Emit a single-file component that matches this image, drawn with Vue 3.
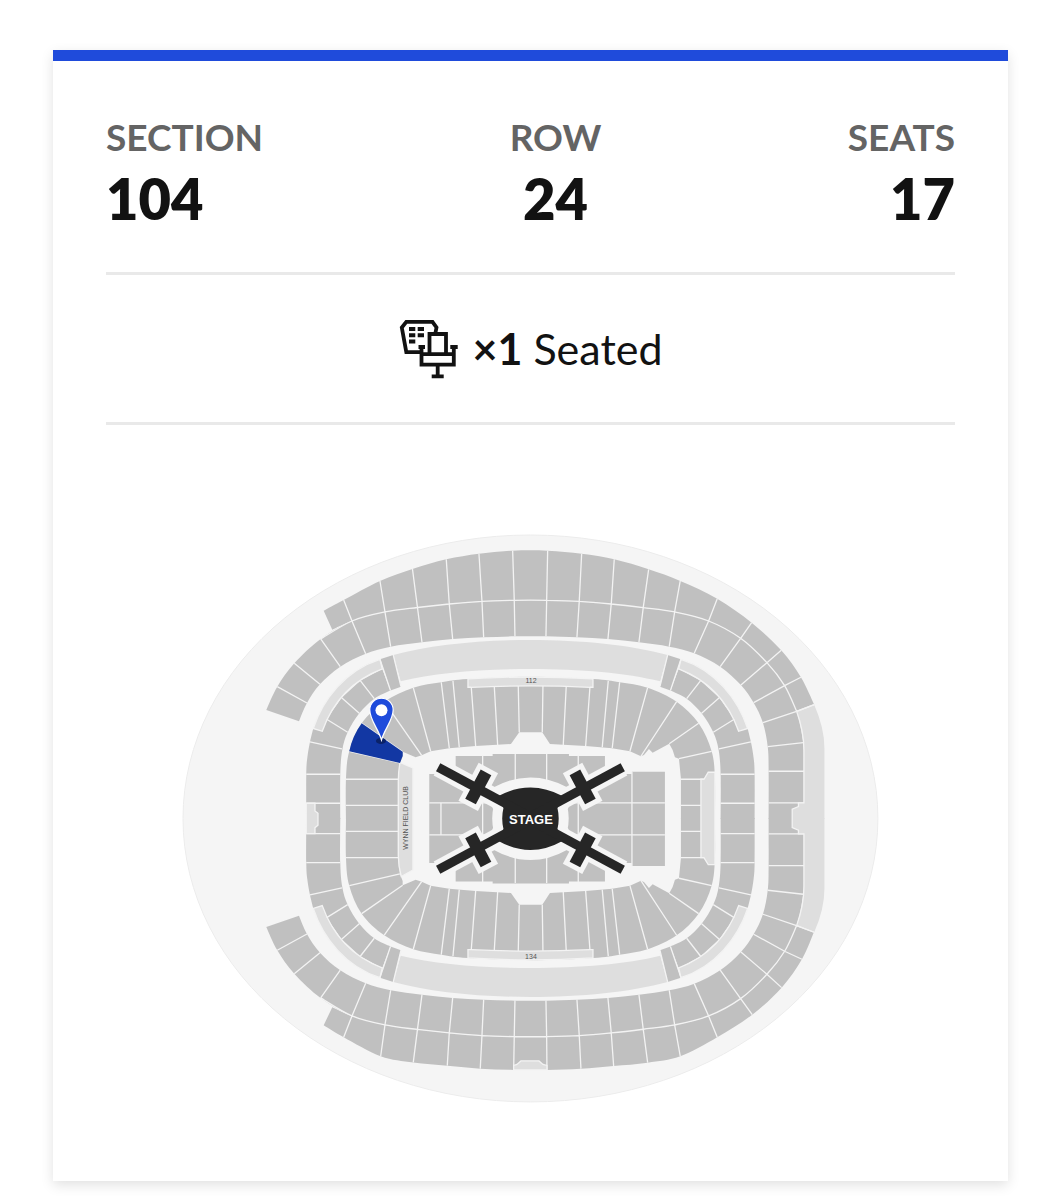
<script setup>
const details = [
    { label: 'SECTION', value: '104' },
    { label: 'ROW', value: '24' },
    { label: 'SEATS', value: '17' },
];

// The venue is symmetric, so most tiers are drawn once and flipped
const halves = ['', 'matrix(1 0 0 -1 0 1637)'];
const quarters = [...halves, 'matrix(-1 0 0 1 1061 0)', 'matrix(-1 0 0 -1 1061 1637)'];

// Smooth curve through a list of points
const segments = (pts) => {
    let d = '';
    for (let i = 0; i < pts.length - 1; i++) {
        const p0 = pts[i - 1] || pts[i];
        const p1 = pts[i];
        const p2 = pts[i + 1];
        const p3 = pts[i + 2] || p2;
        d += ` C ${p1[0] + (p2[0] - p0[0]) / 6} ${p1[1] + (p2[1] - p0[1]) / 6}`;
        d += ` ${p2[0] - (p3[0] - p1[0]) / 6} ${p2[1] - (p3[1] - p1[1]) / 6} ${p2[0]} ${p2[1]}`;
    }
    return d;
};

const curve = (pts) => `M ${pts[0].join(' ')}${segments(pts)}`;

const ribbon = (a, b) => {
    const back = [...b].reverse();
    return `${curve(a)} L ${back[0].join(' ')}${segments(back)} Z`;
};

const lines = (list) => list.map(([a, b]) => `M ${a.join(' ')} L ${b.join(' ')}`).join(' ');

const flip = (pts) => pts.map(([x, y]) => [x, 1637 - y]);

// Upper tier
const tierInner = [
    [299, 721.3], [307, 703], [320, 684.3], [340.3, 666.7], [365.7, 653.7], [390.7, 646.7],
    [422, 642.3], [452.7, 639], [483.7, 637.3], [515, 636.3], [546, 636.3], [577, 637.3],
    [608, 639], [639, 642.3], [669.3, 646.7], [694.3, 653.3], [720.3, 666.7], [741, 685],
    [753.7, 702.7], [763, 722.7], [767.8, 746.7], [768.7, 771.3], [768.7, 819],
];
const tierMiddle = [
    [266.3, 710], [277.3, 686.7], [294.3, 663.3], [320.7, 639], [352, 621], [385, 612],
    [417.5, 607.5], [449.3, 604], [482, 601.3], [514.3, 600.3], [546.7, 600.3], [579.3, 601.3],
    [611.3, 604], [643.3, 607.7], [674.7, 612], [708.7, 621], [740.7, 638.3], [767, 662.7],
    [784.7, 685.7], [796.7, 711.3], [803.3, 742.7], [804, 771.3], [804, 819],
];
const topOuter = [
    [343.7, 600], [380, 581], [412.5, 569], [446.3, 559.3], [479, 553.7], [512.7, 550.7],
    [547.7, 550.7], [581.7, 553.7], [614.3, 559.3], [648.7, 569.3], [680.3, 581], [717.3, 598.7],
    [751.7, 622.7], [781.3, 650.3], [801, 677.3], [814.3, 704.7],
];
const bottomOuter = [
    [343.7, 1037.3], [380.7, 1056.3], [413.3, 1062.5], [447.3, 1065.7], [480.3, 1068.7], [513.7, 1070],
    [547, 1070], [581, 1068.7], [613.7, 1066], [647.7, 1062.7], [680.3, 1056.3], [717.3, 1037.3],
    [752.3, 1014.7], [781.7, 987.7], [802, 959.3], [814, 932.3],
];

const innerRing = ribbon(tierInner, tierMiddle);
const innerRingLines = lines(tierInner.slice(1, 22).map((p, i) => [p, tierMiddle[i + 1]])) + ' ' + lines([[[768.7, 803], [804, 803]]]);

const outerRing = (outer, middle, corner, notch) => ribbon([corner, ...outer], [notch, ...middle]);
const tierOuterMid = tierMiddle.slice(4, 20);
const topRing = outerRing(topOuter, tierOuterMid, [323.7, 610.7], [332.3, 629.7]);
const bottomRing = outerRing(bottomOuter, flip(tierOuterMid), [323.7, 1025.3], [332.3, 1007.3]);
const topRingLines = lines(tierOuterMid.map((p, i) => [p, topOuter[i]])) + ' ' + curve(tierMiddle.slice(3, 20));
const bottomRingLines = lines(flip(tierOuterMid).map((p, i) => [p, bottomOuter[i]])) + ' ' + curve(flip(tierMiddle.slice(3, 20)));

// Mezzanine, one quarter
const mezzBand = 'M393.3 655 C430 645 480 640 531 640 V669 C480 669 435 673 400.7 681.3 Z';
const mezzCurve = 'M380 659.3 C346 670 323 699 313.3 728.5 L322.3 731.3 C333 701 353 680 382.3 669 Z';
const mezzPost = 'M380 659.3 L393.3 655 L401 686.7 L390.5 690.5 Z';
const mezzSeats = `${ribbon(
    [[306.3, 819], [306.3, 774.3], [307.3, 758], [310, 742], [313.3, 728.5]],
    [[340.3, 819], [340.3, 774.3], [342.3, 750], [347.7, 732.3], [359.3, 713.3], [374.3, 698.7], [390.5, 690.5]],
)} M 313.3 728.5 L 322.3 731.3 L 326.7 719.3 L 341.7 697.7 L 360.3 680.7 L 382.3 669 L 390.5 690.5 Z`;
const mezzLines = lines([
    [[310, 742], [342, 749]], [[326.7, 719.3], [347.7, 732.3]], [[341.7, 697.7], [359.3, 713.3]],
    [[360.3, 680.7], [374.3, 698.7]], [[380, 659.3], [390.5, 690.5]], [[393.3, 655], [401, 686.7]],
    [[306.3, 774.3], [340.3, 774.3]], [[306.3, 803.3], [340.3, 803.3]],
]);

// Lower bowl
const bowlOuter = [
    [346, 819], [346, 779], [349.3, 751.3], [361.7, 723.3], [384.3, 701.7], [413.3, 687.7], [441.3, 682.3],
    [468, 679], [530.5, 676.7], [593, 679], [619.7, 682.3], [647.7, 687.7], [676.7, 701.7], [698.7, 723.3],
    [711.7, 751.3], [715, 779], [715, 819],
];
const bowlInner = [
    [681, 819], [681, 779], [679, 758.7], [675, 757.3], [672.7, 750], [669.3, 743.7], [652.7, 752.7],
    [649, 749], [644, 755], [641, 756.3], [630, 751.3], [612, 748.3], [585.7, 746], [550, 744],
    [542.3, 732.3], [519.3, 732.3], [511, 744], [475.7, 746], [449.3, 748.3], [430.7, 751.3],
    [421.7, 755.3], [415.7, 757.3], [402.7, 751.7], [402.7, 756], [400, 763], [398.3, 779], [398.3, 819],
];
const bowl = `${curve(bowlOuter)} L ${bowlInner.map((p) => p.join(' ')).join(' L ')} Z`;
const bowlLines = lines([
    [[361.7, 723.3], [402.7, 751.7]], [[349.3, 751.3], [400, 763]], [[384.3, 701.7], [421.7, 755.3]],
    [[413.3, 687.7], [430.7, 751.3]], [[441.3, 682.3], [449.3, 748]], [[453, 681], [459.3, 747.3]],
    [[471.3, 687], [475.7, 746]], [[494.3, 686], [497.7, 745]], [[518.3, 685.7], [519.3, 732.3]],
    [[543, 685.7], [542.3, 732.3]], [[566.3, 686], [563.3, 745]], [[590, 687], [585.7, 746]],
    [[608.3, 681], [602.3, 747.3]], [[619.7, 682.3], [612.3, 748]], [[647.7, 687.7], [630, 751.3]],
    [[676.7, 701.7], [641, 756.3]], [[698.7, 723.3], [669.3, 743.7]], [[711.7, 751.3], [679, 758.7]],
    [[346, 779.3], [398.3, 779.3]], [[346, 805.5], [398.3, 805.5]],
    [[681, 779.3], [704, 779.3]], [[681, 805.5], [701, 805.5]],
]);

// Stage with its four runways
const runways = [
    [438.2, 767.2, 478.3, 787, 28],
    [622.8, 767.2, 582.7, 787, -28],
    [438.2, 869.8, 478.3, 850, -28],
    [622.8, 869.8, 582.7, 850, 28],
];
const stage = 'M498.5 796 Q530.5 779 562.5 796 L557.5 808 Q560 818.5 557.5 829 L562.5 841 Q530.5 859 498.5 841 L503.5 829 Q501 818.5 503.5 808 Z';
</script>

<template>
    <main class="ticket">
        <dl class="details">
            <div v-for="d in details" :key="d.label" class="detail">
                <dt>{{ d.label }}</dt>
                <dd>{{ d.value }}</dd>
            </div>
        </dl>

        <div class="seating">
            <svg class="seat-icon" viewBox="0 0 60 60" aria-hidden="true">
                <g fill="none" stroke="#121212" stroke-width="3.8">
                    <path d="M36.5 13.5 L37.5 8.5 L33.5 2.8 H7.3 L2.8 8.5 L7.3 33.2 H22" />
                    <path d="M30.5 35 V15 H47 V35" />
                    <path d="M22.5 28 V45.6 H54.8 V28 M22.5 35.2 H54.8" />
                    <path d="M38.7 46 V57 M19.5 28 H26 M51.3 28 H58.7 M32.7 57.4 H44.7" />
                </g>
                <path fill="#121212" d="M10 8 h6.3 v4 h-6.3z M18.7 8 h6.3 v4 h-6.3z M10 14.2 h6.3 v4 h-6.3z M18.7 14.2 h6.3 v4 h-6.3z M10 20.4 h6.3 v4 h-6.3z" />
            </svg>
            <p><strong>×1</strong> Seated</p>
        </div>

        <svg class="venue" viewBox="106 480 849 645" role="img" aria-label="Seat map">
            <ellipse cx="530.5" cy="818.5" rx="347.5" ry="283.5" class="ground" />

            <!-- Upper tier -->
            <path :d="topRing" class="seats" />
            <path :d="bottomRing" class="seats" />
            <g v-for="(t, i) in halves" :key="'tier' + i" :transform="t">
                <path :d="innerRing" class="seats" />
                <path :d="innerRingLines" class="joint" />
                <path d="M796.7 711.3 L814.3 704.7 Q824.5 728 824.5 748 V819 H792.3 V809.3 L798.5 806.7 V803 H804 V745 Q802 727 796.7 711.3 Z" class="club" />
                <path d="M796.7 711.3 Q804 732 804 750 V803 H798.5 V806.7 L792.3 809.3 V819 M796.7 711.3 L814.3 704.7" class="joint" />
            </g>
            <path :d="topRingLines" class="joint" />
            <path :d="bottomRingLines" class="joint" />
            <path d="M513.7 1070 V1065.5 L517 1064.5 L521 1061 H539 L543 1064.5 L547 1065.5 V1070 Z" class="club edged" />

            <!-- Mezzanine -->
            <g v-for="(t, i) in quarters" :key="'mezz' + i" :transform="t">
                <path :d="mezzSeats" class="seats" />
                <path :d="mezzPost" class="seats" />
                <path :d="mezzBand" class="club" />
                <path :d="mezzCurve" class="club edged" />
                <path :d="mezzLines" class="joint" />
            </g>
            <path d="M306.3 803.3 H315 V811 L318 813.3 V825.3 L315 827.7 V833.7 H306.3 Z" class="club edged" />

            <!-- Lower bowl -->
            <g v-for="(t, i) in halves" :key="'bowl' + i" :transform="t">
                <path :d="bowl" class="seats" />
                <path :d="bowlLines" class="joint" />
                <path d="M468 679 Q530.5 675 593 679 V687.3 H590 Q530.5 684.5 471.3 687.3 H468 Z" class="club edged" />
            </g>
            <path d="M701 779.3 H704 L708.3 772.3 H715 V864.7 H708.3 L704 857.7 H701 Z" class="club edged" />
            <path d="M400 762.5 L413 768 V870 L401.3 876.5 Q398.3 866 398.3 855 V782 Q398.3 772 400 762.5 Z" class="club edged" />

            <!-- Floor -->
            <path d="M429.3 774 H455.7 V756 H492.7 V754 H569 V756 H605 V774 H632 V771.7 H665 V866 H632 V863 H605 V881.5 H569 V883.5 H492.7 V881.5 H455.7 V863 H429.3 Z" class="seats" />
            <path d="M429.3 803 H665 M429.3 835 H665 M632 771.7 V866 M441 803 V835 M482.7 755 V882 M515.3 754 V883 M546.7 754 V883 M578.3 755 V882" class="joint" />

            <g class="halo">
                <path :d="stage" class="stage-halo" />
                <g v-for="(r, i) in runways" :key="'halo' + i">
                    <line :x1="r[0]" :y1="r[1]" x2="530.5" :y2="r[1] < 818 ? 817 : 820" stroke-width="19" />
                    <rect :x="r[2] - 11" :y="r[3] - 21.5" width="22" height="43" :transform="`rotate(${r[4]} ${r[2]} ${r[3]})`" />
                </g>
            </g>
            <g class="stage">
                <path :d="stage" />
                <g v-for="(r, i) in runways" :key="'runway' + i">
                    <line :x1="r[0]" :y1="r[1]" x2="530.5" :y2="r[1] < 818 ? 817 : 820" stroke-width="9" />
                    <rect :x="r[2] - 6" :y="r[3] - 16.5" width="12" height="33" :transform="`rotate(${r[4]} ${r[2]} ${r[3]})`" />
                </g>
            </g>

            <!-- Selected section and pin -->
            <path d="M361.7 723.3 L402.7 751.7 L402.7 756 L400 763 L349.3 751.3 Q352.5 736 361.7 723.3 Z" fill="#1237a3" />
            <ellipse cx="381" cy="741" rx="5" ry="3" fill="#0b2268" />
            <path d="M381.5 740 C378.5 729 369.8 720 369.8 710 A11.7 11.7 0 0 1 393.2 710 C393.2 720 384.5 729 381.5 740 Z" fill="#1f4bdb" stroke="#fff" stroke-width="1.2" />
            <circle cx="381.5" cy="710.3" r="6" fill="#fff" />

            <text x="531" y="824" class="stage-label">STAGE</text>
            <text x="531" y="683" class="map-label">112</text>
            <text x="531" y="959" class="map-label">134</text>
            <text x="405" y="818" class="map-label" transform="rotate(-90 405 818)" dy="3">WYNN FIELD CLUB</text>
        </svg>
    </main>
</template>

<style>
body {
    margin: 0;
    background: #fff;
}
</style>

<style scoped>
.ticket {
    box-sizing: border-box;
    margin: 50px 5% 19px;
    padding: 0 53px 56px;
    border-top: 11px solid #1f4bdb;
    background: #fff;
    box-shadow: 0 4px 12px rgba(0, 0, 0, 0.12);
    color: #121212;
    font-family: Lato, "Open Sans", sans-serif;
}
.details {
    display: flex;
    justify-content: space-between;
    margin: 0;
    padding: 54px 0 41px;
    border-bottom: 3px solid #e9e9e9;
}
.detail {
    text-align: center;
}
.detail:first-child {
    text-align: left;
}
.detail:last-child {
    text-align: right;
}
dt {
    color: #646464;
    font-size: 37px;
    font-weight: 700;
    line-height: 44px;
}
dd {
    margin: 8px 0 0;
    font-size: 56px;
    font-weight: 800;
    line-height: 64px;
}
.seating {
    display: flex;
    align-items: center;
    justify-content: center;
    gap: 14px;
    height: 147px;
    border-bottom: 3px solid #e9e9e9;
}
.seating p {
    margin: 0;
    font-size: 43px;
    line-height: 52px;
}
.seat-icon {
    width: 60px;
    height: 60px;
}
.venue {
    display: block;
    width: 100%;
    margin-top: 55px;
}
.ground {
    fill: #f5f5f5;
    stroke: #ececec;
}
.seats { fill: #c0c0c0; }
.club { fill: #dedede; }
.joint,
.edged {
    stroke: #f3f3f3;
    stroke-width: 1.3;
}
.joint { fill: none; }
.halo {
    fill: #f5f5f5;
    stroke: #f5f5f5;
}
.halo rect { stroke: none; }
.stage-halo { stroke-width: 20; }
.stage {
    fill: #262626;
}
.stage line { stroke: #262626; }
.stage-label {
    fill: #fff;
    font: bold 13px "Liberation Sans", Arial, sans-serif;
    text-anchor: middle;
}
.map-label {
    fill: #555;
    font: 7px "Liberation Sans", Arial, sans-serif;
    text-anchor: middle;
}
</style>
